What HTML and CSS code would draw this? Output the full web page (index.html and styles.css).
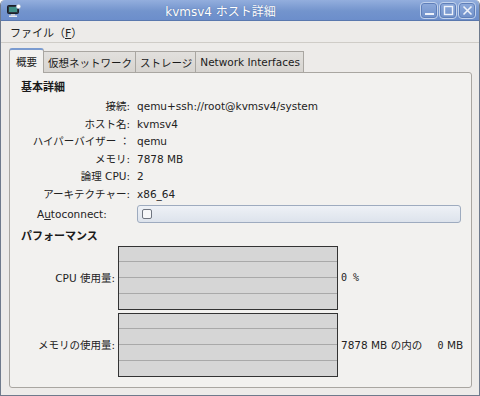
FILE: index.html
```html
<!DOCTYPE html>
<html lang="ja">
<head>
  <meta charset="UTF-8" />
  <title>kvmsv4 ホスト詳細</title>
  <link rel="stylesheet" href="styles.css">
</head>
<body>
  <div class="window">
    <div class="titlebar">
      <svg class="app-icon" width="14" height="13" viewBox="0 0 14 13">
        <rect x="0.5" y="1.5" width="11" height="8" rx="1" fill="#2b3440" stroke="#1a1f26"/>
        <rect x="2" y="3" width="8" height="5" fill="#3f8f86"/>
        <rect x="4" y="10" width="4" height="1.5" fill="#c9ced6"/>
        <rect x="2" y="11.5" width="8" height="1.5" fill="#e6e9ee"/>
        <circle cx="11.5" cy="2.5" r="2.2" fill="#ffffff" stroke="#8fa7c9" stroke-width="0.6"/>
      </svg>
      <div class="title">kvmsv4 ホスト詳細</div>
      <div class="wm-buttons">
        <span class="wm-btn"><svg width="11" height="11" viewBox="0 0 11 11"><rect x="1" y="8" width="9" height="2" fill="#eef2fa"/></svg></span>
        <span class="wm-btn"><svg width="11" height="11" viewBox="0 0 11 11"><rect x="1.5" y="1.5" width="8" height="8" fill="none" stroke="#eef2fa" stroke-width="1.4"/></svg></span>
        <span class="wm-btn"><svg width="11" height="11" viewBox="0 0 11 11"><path d="M1.5 1.5 L9.5 9.5 M9.5 1.5 L1.5 9.5" stroke="#eef2fa" stroke-width="1.6"/></svg></span>
      </div>
    </div>

    <div class="menubar">
      <span class="menu-item">ファイル（<u>F</u>）</span>
    </div>

    <div class="content">
      <div class="tabs">
        <span class="tab active">概要</span>
        <span class="tab">仮想ネットワーク</span>
        <span class="tab">ストレージ</span>
        <span class="tab">Network Interfaces</span>
      </div>

      <div class="panel">
        <div class="section-title">基本詳細</div>
        <div class="details">
          <span class="label">接続:</span><span class="value">qemu+ssh://root@kvmsv4/system</span>
          <span class="label">ホスト名:</span><span class="value">kvmsv4</span>
          <span class="label">ハイパーバイザー ：</span><span class="value">qemu</span>
          <span class="label">メモリ:</span><span class="value">7878 MB</span>
          <span class="label">論理 CPU:</span><span class="value">2</span>
          <span class="label">アーキテクチャー:</span><span class="value">x86_64</span>
          <span class="label left">A<u>u</u>toconnect:</span>
          <span class="value"><span class="autoconnect"><span class="check"></span></span></span>
        </div>

        <div class="section-title perf">パフォーマンス</div>
        <div class="graphs">
          <span class="glabel">CPU 使用量:</span>
          <div class="graph"><i></i><i></i><i></i></div>
          <span class="gvalue mono">0 %</span>

          <span class="glabel">メモリの使用量:</span>
          <div class="graph"><i></i><i></i><i></i></div>
          <span class="gvalue">7878 MB の内の <span class="mono">&nbsp;&nbsp;0</span> MB</span>
        </div>
      </div>
    </div>
  </div>
</body>
</html>
```

FILE: styles.css
```css
* {
  box-sizing: border-box;
}
body {
  margin: 0;
  font-family: "DejaVu Sans", "Noto Sans CJK JP", sans-serif;
  font-size: 10.5px;
  color: #1a1a1a;
  background: #ffffff;
}

.window {
  width: 480px;
  height: 396px;
  display: flex;
  flex-direction: column;
  background: #edebe9;
  border: 1px solid #6f7a8c;
  border-top: none;
  border-radius: 5px 5px 0 0;
  overflow: hidden;
}

/* Barra de titulo */
.titlebar {
  height: 21px;
  flex: none;
  display: flex;
  align-items: center;
  padding: 0 3px 0 6px;
  background: linear-gradient(#93aedd, #7394cd 55%, #6c8ecb);
  border-bottom: 1px solid #5a78ae;
}
.app-icon {
  flex: none;
}
.title {
  flex: 1;
  text-align: center;
  color: #ffffff;
  font-size: 12px;
  text-shadow: 0 0 1px #4a6699;
}
.wm-buttons {
  display: flex;
  gap: 1px;
}
.wm-btn {
  width: 18px;
  height: 17px;
  display: flex;
  align-items: center;
  justify-content: center;
  border: 1px solid #c2d2ec;
  border-radius: 4px;
  background: linear-gradient(#8eaadb, #6f90c9);
  box-shadow: inset 0 0 0 1px #5f7fb9;
}

/* Menu */
.menubar {
  height: 22px;
  flex: none;
  display: flex;
  align-items: center;
  padding-left: 9px;
  font-size: 11px;
  border-bottom: 1px solid #cfccc7;
  background: #edebe9;
}
.menu-item {
  color: #222;
}

.content {
  flex: 1;
  display: flex;
  flex-direction: column;
  padding: 5px 7px 7px 8px;
}

/* Pestanas */
.tabs {
  display: flex;
  align-items: flex-end;
  height: 24px;
  position: relative;
  z-index: 1;
}
.tab {
  height: 21px;
  display: flex;
  align-items: center;
  padding: 0 3px 0 4px;
  border: 1px solid #a9a6a1;
  border-bottom: none;
  border-left: none;
  background: linear-gradient(#e2e0dd, #d7d4d0);
  color: #1a1a1a;
}
.tab.active {
  height: 25px;
  padding: 0 6px;
  border-left: 1px solid #a9a6a1;
  border-radius: 3px 3px 0 0;
  border-top: 2px solid #7b9bd0;
  background: #f2f1ef;
  margin-bottom: -1px;
}

.panel {
  flex: 1;
  background: #f2f1ef;
  border: 1px solid #a9a6a1;
  border-radius: 0 3px 3px 3px;
  padding: 8px 10px 0 11px;
}

.section-title {
  font-weight: bold;
  font-size: 11px;
  height: 14px;
  line-height: 14px;
}
.section-title.perf {
  margin-top: 6px;
}

.details {
  display: grid;
  grid-template-columns: 93px 1fr;
  column-gap: 7px;
  padding: 3px 0 0 16px;
  align-items: center;
}
.label {
  justify-self: end;
  white-space: nowrap;
  height: 17.6px;
  line-height: 17.6px;
  color: #222;
}
.label.left {
  justify-self: start;
  height: 20px;
  line-height: 20px;
}
.value {
  line-height: 17.6px;
  color: #222;
}
.autoconnect {
  display: flex;
  align-items: center;
  height: 18px;
  margin-top: 1px;
  border: 1px solid #9eabbf;
  border-radius: 3px;
  background: linear-gradient(#eef1f6, #dde3ec);
  padding-left: 4px;
}
.check {
  width: 10px;
  height: 10px;
  border: 1px solid #6f7580;
  border-radius: 2px;
  background: #f6f7f9;
}

.graphs {
  display: grid;
  grid-template-columns: 94px 220px 1fr;
  grid-template-rows: 64px 64px;
  row-gap: 3px;
  column-gap: 3px;
  padding-top: 2px;
  align-items: center;
}
.glabel {
  text-align: right;
  white-space: nowrap;
  color: #222;
}
.graph {
  height: 100%;
  background: #d6d6d6;
  border: 1px solid #333;
  display: flex;
  flex-direction: column;
  justify-content: space-evenly;
}
.graph i {
  display: block;
  height: 1px;
  background: #a9a9a9;
}
.gvalue {
  white-space: nowrap;
  color: #222;
}
.mono {
  font-family: "DejaVu Sans Mono", monospace;
  font-size: 10px;
}
```
